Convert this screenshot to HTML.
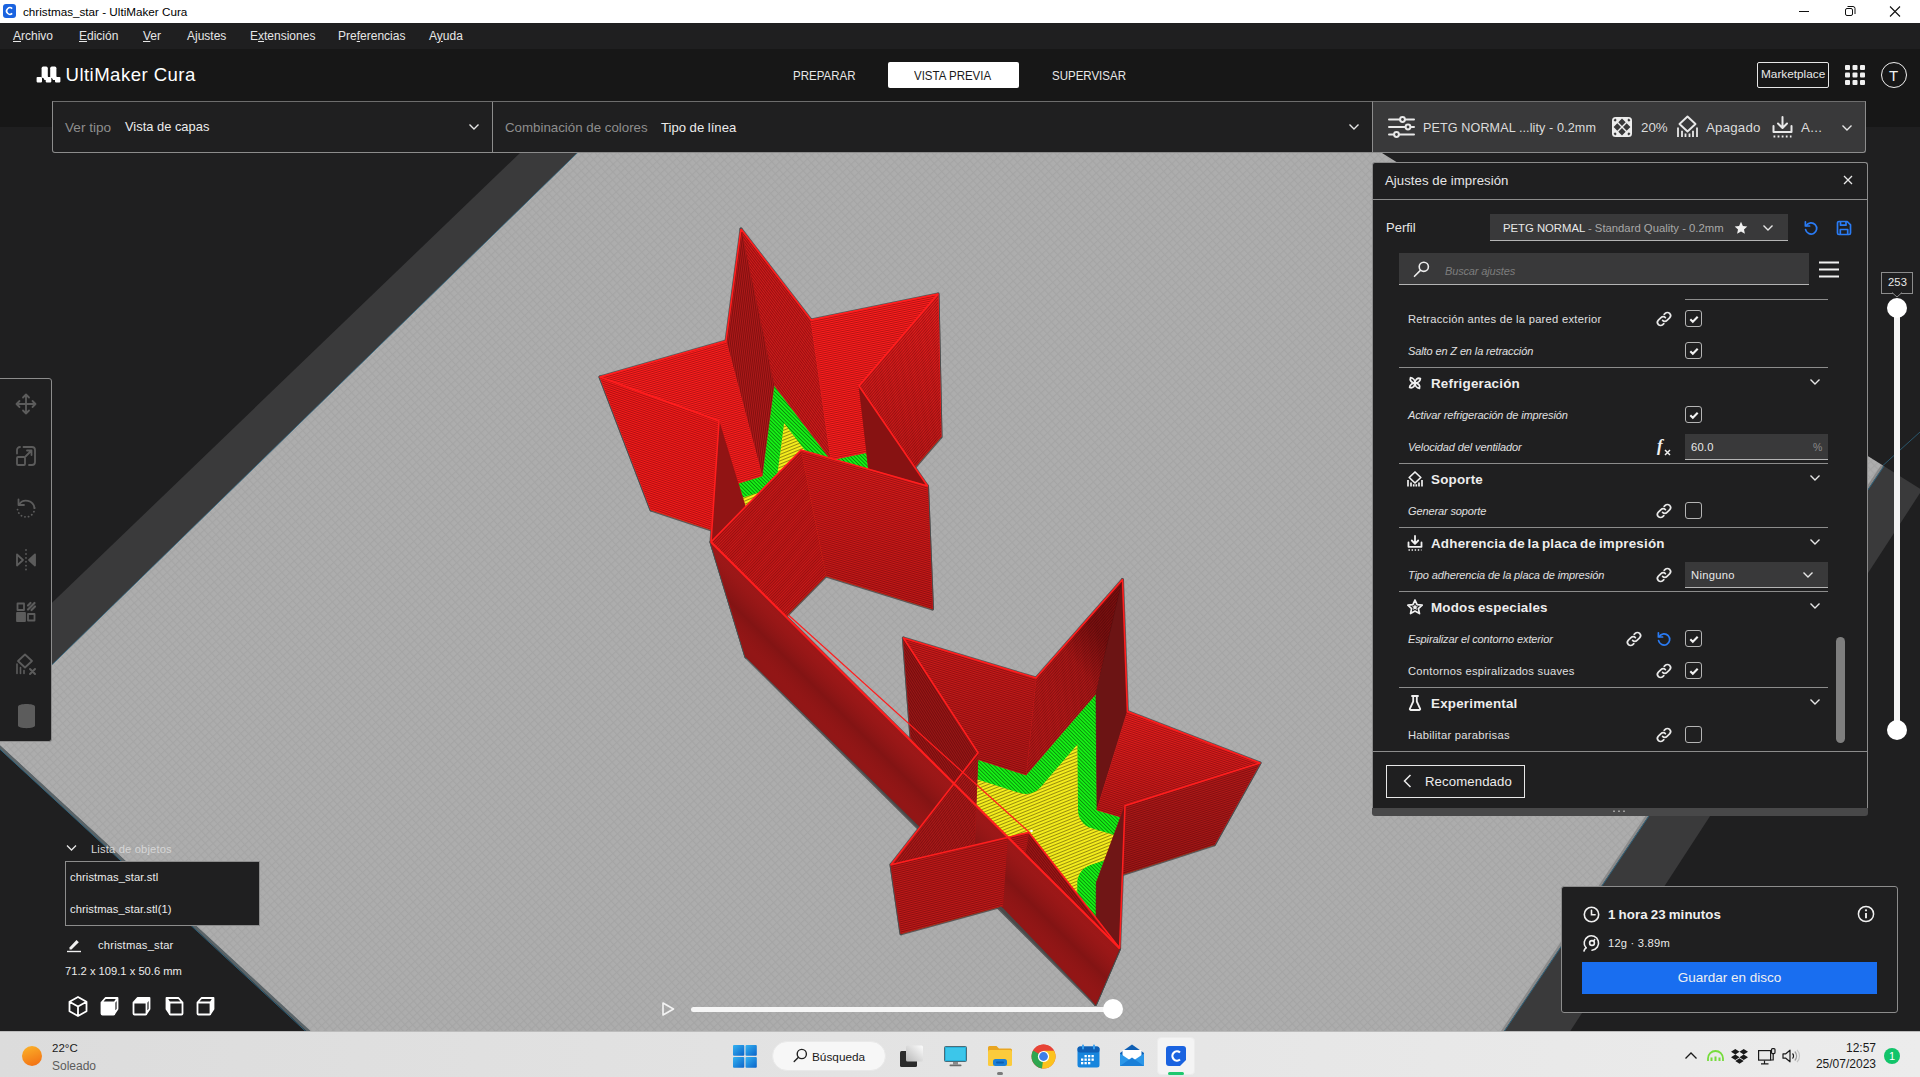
<!DOCTYPE html>
<html lang="es">
<head>
<meta charset="utf-8">
<title>christmas_star - UltiMaker Cura</title>
<style>
*{box-sizing:border-box;margin:0;padding:0}
html,body{width:1920px;height:1077px;overflow:hidden;background:#1f1f20}
body{font-family:"Liberation Sans","DejaVu Sans",sans-serif;color:#d9d9d9;font-size:12px;position:relative}
.abs{position:absolute}
.t{position:absolute;white-space:nowrap;line-height:1}
#scene{position:absolute;left:0;top:0;width:1920px;height:1077px}
/* title bar */
#titlebar{left:0;top:0;width:1920px;height:23px;background:#fff}
#titlebar .t{color:#000;font-size:11.700px}
/* menu */
#menubar{left:0;top:23px;width:1920px;height:26px;background:#1f1f20}
#menubar .t{color:#e6e6e6;font-size:12px;top:7px}
#menubar u{text-decoration-thickness:1px;text-underline-offset:1px}
/* header */
#header{left:0;top:49px;width:1920px;height:78px;background:#171717}
.stage{font-size:13px;color:#e8e8e8;top:20px;transform:scaleX(.885);transform-origin:0 50%}
/* view toolbar */
#viewbar{left:52px;top:101px;width:1321px;height:52px;background:#1f1f20;border:1px solid #8c8c8c;border-top-color:#6d6d6d;border-radius:0 0 0 3px}
#setup{left:1372px;top:101px;width:494px;height:52px;background:#39393a;border:1px solid #8c8c8c;border-top-color:#6d6d6d;border-radius:0 0 3px 0}
#setup .t{color:#dcdcdc;font-size:13.5px;top:18px}
/* settings panel */
#panel{left:1372px;top:162px;width:496px;height:646px;background:#1f1f20;border:1px solid #8c8c8c;border-bottom:none;border-radius:3px 3px 0 0}
#panelgrip{left:1372px;top:808px;width:496px;height:8px;background:#484849;border-radius:0 0 3px 3px}
.sep{position:absolute;height:1px;background:#8c8c8c}
.lbl{position:absolute;white-space:nowrap;line-height:1;font-size:11.5px;color:#dedede}
.lbl.i{font-style:italic}
.cat{position:absolute;white-space:nowrap;line-height:1;font-size:13.5px;font-weight:bold;color:#e6e6e6}
.cb{position:absolute;width:17px;height:17px;border:1px solid #b4b4b4;border-radius:3px;background:#1f1f20}
.ic{position:absolute;overflow:visible}
/* left toolbar */
#lefttools{left:-1px;top:378px;width:53px;height:364px;background:#1f1f20;border:1px solid #8c8c8c;border-radius:0 3px 3px 0}
/* object list */
#objlist{left:65px;top:861px;width:195px;height:65px;background:#1f1f20;border:1px solid #8c8c8c}
/* action panel */
#action{left:1561px;top:886px;width:337px;height:127px;background:#1f1f20;border:1px solid #8c8c8c;border-radius:3px}
#savebtn{left:1582px;top:962px;width:295px;height:32px;background:#196ef0;color:#f0f0f0;font-size:13.5px;text-align:center;line-height:32px}
/* taskbar */
#taskbar{left:0;top:1031px;width:1920px;height:46px;background:linear-gradient(90deg,#dcdcdc 0%,#e4e4e4 50%,#ececec 100%)}
#taskbar .t{color:#1a1a1a;font-size:12px}
</style>
</head>
<body>
<!--SCENE-->
<svg id="scene" viewBox="0 0 1920 1077">
<defs><linearGradient id="gU2" gradientUnits="userSpaceOnUse" x1="0" y1="300" x2="0" y2="500"><stop offset="0" stop-color="#1a0000" stop-opacity="0"/><stop offset="1" stop-color="#1a0000" stop-opacity="0.22"/></linearGradient>
<linearGradient id="gU4" gradientUnits="userSpaceOnUse" x1="0" y1="470" x2="0" y2="600"><stop offset="0" stop-color="#1a0000" stop-opacity="0"/><stop offset="1" stop-color="#1a0000" stop-opacity="0.12"/></linearGradient>
<linearGradient id="gL1" gradientUnits="userSpaceOnUse" x1="0" y1="720" x2="0" y2="840"><stop offset="0" stop-color="#1a0000" stop-opacity="0"/><stop offset="1" stop-color="#1a0000" stop-opacity="0.25"/></linearGradient>
<linearGradient id="gL2" gradientUnits="userSpaceOnUse" x1="0" y1="780" x2="0" y2="870"><stop offset="0" stop-color="#1a0000" stop-opacity="0"/><stop offset="1" stop-color="#1a0000" stop-opacity="0.12"/></linearGradient>
<linearGradient id="gL8" gradientUnits="userSpaceOnUse" x1="0" y1="650" x2="0" y2="770"><stop offset="0" stop-color="#1a0000" stop-opacity="0"/><stop offset="1" stop-color="#1a0000" stop-opacity="0.14"/></linearGradient>
<pattern id="grid" width="5.6" height="5.6" patternUnits="userSpaceOnUse" patternTransform="rotate(-43)"><rect width="5.6" height="5.6" fill="#adadad"/><path d="M0 0.5H5.6M0.5 0V5.6" stroke="#a5a5a5" stroke-width="1.3"/></pattern>
<pattern id="sta" width="2" height="2" patternUnits="userSpaceOnUse" patternTransform="rotate(0)"><rect y="1" width="2" height="1" fill="#3a0000" fill-opacity=".26"/></pattern>
<pattern id="stb" width="2" height="2" patternUnits="userSpaceOnUse" patternTransform="rotate(20)"><rect y="1" width="2" height="1" fill="#3a0000" fill-opacity=".26"/></pattern>
<pattern id="stc" width="2" height="2" patternUnits="userSpaceOnUse" patternTransform="rotate(-18)"><rect y="1" width="2" height="1" fill="#3a0000" fill-opacity=".26"/></pattern>
<pattern id="std" width="2" height="2" patternUnits="userSpaceOnUse" patternTransform="rotate(45)"><rect y="1" width="2" height="1" fill="#3a0000" fill-opacity=".26"/></pattern>
<pattern id="ste" width="2" height="2" patternUnits="userSpaceOnUse" patternTransform="rotate(-45)"><rect y="1" width="2" height="1" fill="#3a0000" fill-opacity=".26"/></pattern>
<pattern id="stf" width="2" height="2" patternUnits="userSpaceOnUse" patternTransform="rotate(70)"><rect y="1" width="2" height="1" fill="#3a0000" fill-opacity=".26"/></pattern>
<pattern id="hy" width="3" height="3" patternUnits="userSpaceOnUse" patternTransform="rotate(-22)"><rect width="3" height="3" fill="#f4ec1c"/><rect y="2" width="3" height="1" fill="#4a4000" fill-opacity=".55"/></pattern>
<pattern id="hg" width="2.6" height="2.6" patternUnits="userSpaceOnUse" patternTransform="rotate(45)"><rect width="2.6" height="2.6" fill="#16f016"/><rect y="1.8" width="2.6" height=".8" fill="#003a00" fill-opacity=".6"/></pattern>
<pattern id="w2109_0" width="2" height="2" patternUnits="userSpaceOnUse" patternTransform="rotate(52.6)"><rect y="1" width="2" height="1" fill="#3a0000" fill-opacity="0.38"/></pattern>
<pattern id="w2109_9" width="2" height="2" patternUnits="userSpaceOnUse" patternTransform="rotate(-82.4)"><rect y="1" width="2" height="1" fill="#3a0000" fill-opacity="0.38"/></pattern>
<pattern id="w2109_1" width="2" height="2" patternUnits="userSpaceOnUse" patternTransform="rotate(-11.7)"><rect y="1" width="2" height="1" fill="#3a0000" fill-opacity="0.38"/></pattern>
<pattern id="w2109_2" width="2" height="2" patternUnits="userSpaceOnUse" patternTransform="rotate(130.7)"><rect y="1" width="2" height="1" fill="#3a0000" fill-opacity="0.38"/></pattern>
<pattern id="w2109_8" width="2" height="2" patternUnits="userSpaceOnUse" patternTransform="rotate(-16.5)"><rect y="1" width="2" height="1" fill="#3a0000" fill-opacity="0.38"/></pattern>
<pattern id="w2109_7" width="2" height="2" patternUnits="userSpaceOnUse" patternTransform="rotate(-160.7)"><rect y="1" width="2" height="1" fill="#3a0000" fill-opacity="0.38"/></pattern>
<pattern id="w2109_4" width="2" height="2" patternUnits="userSpaceOnUse" patternTransform="rotate(-163.5)"><rect y="1" width="2" height="1" fill="#3a0000" fill-opacity="0.38"/></pattern>
<pattern id="w2109_5" width="2" height="2" patternUnits="userSpaceOnUse" patternTransform="rotate(134.5)"><rect y="1" width="2" height="1" fill="#3a0000" fill-opacity="0.38"/></pattern>
<pattern id="w7497_9" width="2" height="2" patternUnits="userSpaceOnUse" patternTransform="rotate(-48.9)"><rect y="1" width="2" height="1" fill="#3a0000" fill-opacity="0.38"/></pattern>
<pattern id="w7497_8" width="2" height="2" patternUnits="userSpaceOnUse" patternTransform="rotate(17.3)"><rect y="1" width="2" height="1" fill="#3a0000" fill-opacity="0.38"/></pattern>
<pattern id="w7497_7" width="2" height="2" patternUnits="userSpaceOnUse" patternTransform="rotate(-122.2)"><rect y="1" width="2" height="1" fill="#3a0000" fill-opacity="0.38"/></pattern>
<pattern id="w7497_1" width="2" height="2" patternUnits="userSpaceOnUse" patternTransform="rotate(19.0)"><rect y="1" width="2" height="1" fill="#3a0000" fill-opacity="0.38"/></pattern>
<pattern id="w7497_2" width="2" height="2" patternUnits="userSpaceOnUse" patternTransform="rotate(162.2)"><rect y="1" width="2" height="1" fill="#3a0000" fill-opacity="0.38"/></pattern>
<linearGradient id="gL9" gradientUnits="userSpaceOnUse" x1="1040" y1="690" x2="1105" y2="640"><stop offset="0" stop-color="#000" stop-opacity="0"/><stop offset=".55" stop-color="#000" stop-opacity=".06"/><stop offset="1" stop-color="#1a0000" stop-opacity=".38"/></linearGradient>
<pattern id="w7497_6" width="2" height="2" patternUnits="userSpaceOnUse" patternTransform="rotate(-51.6)"><rect y="1" width="2" height="1" fill="#3a0000" fill-opacity="0.38"/></pattern>
<pattern id="w7497_5" width="2" height="2" patternUnits="userSpaceOnUse" patternTransform="rotate(165.8)"><rect y="1" width="2" height="1" fill="#3a0000" fill-opacity="0.38"/></pattern>
<pattern id="w7497_4" width="2" height="2" patternUnits="userSpaceOnUse" patternTransform="rotate(-127.7)"><rect y="1" width="2" height="1" fill="#3a0000" fill-opacity="0.38"/></pattern>
<linearGradient id="gA" gradientUnits="userSpaceOnUse" x1="900" y1="740" x2="860" y2="780"><stop offset="0" stop-color="#b01a1a" stop-opacity=".4"/><stop offset=".4" stop-color="#7a1212" stop-opacity=".55"/><stop offset=".75" stop-color="#a01616" stop-opacity=".25"/><stop offset="1" stop-color="#a01616" stop-opacity="0"/></linearGradient></defs>
<rect width="1920" height="1077" fill="#1f1f20"/>
<polygon points="631.6,100.0 575.0,100.0 0.0,652.8 -130.0,778.0 -16.0,731.0" fill="#3a3a3b" />
<polygon points="1883.0,465.4 1922.0,490.0 1540.4,1077.0 1472.6,1077.0" fill="#3a3a3b" />
<polygon points="-16.0,731.0 631.6,100.0 1297.0,100.0 1883.0,465.4 1472.6,1077.0 359.6,1077.0" fill="url(#grid)" />
<polyline points="-16.0,732.5 360.0,1078.5" fill="none" stroke="#5b6468" stroke-width="3"/>
<polyline points="-16.0,734.5 359.0,1080.5" fill="none" stroke="#2f6f8f" stroke-width="1" stroke-opacity=".8"/>
<polyline points="631.6,100.0 -16.0,731.0" fill="none" stroke="#2f6f8f" stroke-width="1" stroke-opacity=".7"/>
<polyline points="1882.0,466.0 1471.6,1077.0" fill="none" stroke="#8a8a8a" stroke-width="2.4"/>
<polyline points="1884.0,466.0 1473.6,1077.0" fill="none" stroke="#2f6f8f" stroke-width="1" stroke-opacity=".8"/>
<polyline points="1883.0,465.4 1920.0,432.0" fill="none" stroke="#2f6f8f" stroke-width="1" stroke-opacity=".7"/>
<!--WATERMARK-->
<g fill="#4a4a4a" stroke="#4a4a4a" stroke-opacity=".85" stroke-width="3" stroke-linejoin="round"><polygon points="741.0,229.0 811.0,320.0 831.0,460.0 774.0,385.0"/><polygon points="1122.5,579.6 1127.4,711.5 1097.0,810.0 1096.0,693.7"/><polygon points="811.0,320.0 938.0,294.0 941.0,437.0 831.0,460.0"/><polygon points="1127.4,711.5 1260.0,763.0 1214.3,844.7 1097.0,810.0"/><polygon points="938.0,294.0 859.0,386.0 874.0,515.0 941.0,437.0"/><polygon points="1260.0,763.0 1125.0,805.7 1096.3,883.0 1214.3,844.7"/><polygon points="859.0,386.0 927.5,486.0 932.5,609.0 874.0,515.0"/><polygon points="1125.0,805.7 1119.6,948.3 1095.5,1004.5 1096.3,883.0"/><polygon points="927.5,486.0 801.0,450.0 826.0,576.0 932.5,609.0"/><polygon points="1119.6,948.3 1029.0,832.4 1017.0,902.0 1095.5,1004.5"/><polygon points="801.0,450.0 711.0,542.0 746.0,657.0 826.0,576.0"/><polygon points="1029.0,832.4 891.0,864.7 901.0,933.8 1017.0,902.0"/><polygon points="711.0,542.0 719.0,421.0 757.0,545.0 746.0,657.0"/><polygon points="891.0,864.7 978.0,752.7 974.5,843.0 901.0,933.8"/><polygon points="719.0,421.0 600.0,377.0 651.0,510.0 757.0,545.0"/><polygon points="978.0,752.7 903.4,638.0 911.0,738.0 974.5,843.0"/><polygon points="600.0,377.0 726.0,341.0 762.0,476.0 651.0,510.0"/><polygon points="903.4,638.0 1036.0,678.0 1026.0,775.0 911.0,738.0"/><polygon points="726.0,341.0 741.0,229.0 774.0,385.0 762.0,476.0"/><polygon points="1036.0,678.0 1122.5,579.6 1096.0,693.7 1026.0,775.0"/><polygon points="711.0,542.0 1119.6,948.3 1095.5,1004.5 746.0,657.0"/></g>
<clipPath id="cfu"><polygon points="774.0,385.0 831.0,460.0 941.0,437.0 874.0,515.0 932.5,609.0 826.0,576.0 746.0,657.0 757.0,545.0 651.0,510.0 762.0,476.0"/></clipPath>
<g clip-path="url(#cfu)"><polygon points="774.0,385.0 831.0,460.0 941.0,437.0 874.0,515.0 932.5,609.0 826.0,576.0 746.0,657.0 757.0,545.0 651.0,510.0 762.0,476.0" fill="url(#hy)" stroke="url(#hg)" stroke-width="30" stroke-linejoin="round"/></g>
<polygon points="741.0,229.0 811.0,320.0 831.0,460.0 774.0,385.0" fill="#d11b1b" stroke="#d11b1b" stroke-width=".7" stroke-linejoin="round"/>
<polygon points="741.0,229.0 811.0,320.0 831.0,460.0 774.0,385.0" fill="url(#w2109_0)"/>
<polygon points="726.0,341.0 741.0,229.0 774.0,385.0 762.0,476.0" fill="#ae1919" stroke="#ae1919" stroke-width=".7" stroke-linejoin="round"/>
<polygon points="726.0,341.0 741.0,229.0 774.0,385.0 762.0,476.0" fill="url(#w2109_9)"/>
<polygon points="811.0,320.0 938.0,294.0 941.0,437.0 831.0,460.0" fill="#ff1e1e" stroke="#ff1e1e" stroke-width=".7" stroke-linejoin="round"/>
<polygon points="811.0,320.0 938.0,294.0 941.0,437.0 831.0,460.0" fill="url(#w2109_1)"/>
<polygon points="938.0,294.0 859.0,386.0 874.0,515.0 941.0,437.0" fill="#e91e1e" stroke="#e91e1e" stroke-width=".7" stroke-linejoin="round"/>
<polygon points="938.0,294.0 859.0,386.0 874.0,515.0 941.0,437.0" fill="url(#gU2)"/>
<polygon points="938.0,294.0 859.0,386.0 874.0,515.0 941.0,437.0" fill="url(#w2109_2)"/>
<polygon points="600.0,377.0 726.0,341.0 762.0,476.0 651.0,510.0" fill="#ff1e1e" stroke="#ff1e1e" stroke-width=".7" stroke-linejoin="round"/>
<polygon points="600.0,377.0 726.0,341.0 762.0,476.0 651.0,510.0" fill="url(#w2109_8)"/>
<polygon points="719.0,421.0 600.0,377.0 651.0,510.0 757.0,545.0" fill="#f81b1b" stroke="#f81b1b" stroke-width=".7" stroke-linejoin="round"/>
<polygon points="719.0,421.0 600.0,377.0 651.0,510.0 757.0,545.0" fill="url(#w2109_7)"/>
<polygon points="859.0,386.0 927.5,486.0 932.5,609.0 874.0,515.0" fill="#871212" stroke="#871212" stroke-width=".7" stroke-linejoin="round"/>
<polygon points="927.5,486.0 801.0,450.0 826.0,576.0 932.5,609.0" fill="#da1b1b" stroke="#da1b1b" stroke-width=".7" stroke-linejoin="round"/>
<polygon points="927.5,486.0 801.0,450.0 826.0,576.0 932.5,609.0" fill="url(#gU4)"/>
<polygon points="927.5,486.0 801.0,450.0 826.0,576.0 932.5,609.0" fill="url(#w2109_4)"/>
<polygon points="711.0,542.0 719.0,421.0 757.0,545.0 746.0,657.0" fill="#911414" stroke="#911414" stroke-width=".7" stroke-linejoin="round"/>
<polygon points="801.0,450.0 711.0,542.0 746.0,657.0 826.0,576.0" fill="#cc1919" stroke="#cc1919" stroke-width=".7" stroke-linejoin="round"/>
<polygon points="801.0,450.0 711.0,542.0 746.0,657.0 826.0,576.0" fill="url(#w2109_5)"/>
<clipPath id="cfl"><polygon points="1096.0,693.7 1097.0,810.0 1214.3,844.7 1096.3,883.0 1095.5,1004.5 1017.0,902.0 901.0,933.8 974.5,843.0 911.0,738.0 1026.0,775.0"/></clipPath>
<g clip-path="url(#cfl)"><polygon points="1096.0,693.7 1097.0,810.0 1214.3,844.7 1096.3,883.0 1095.5,1004.5 1017.0,902.0 901.0,933.8 974.5,843.0 911.0,738.0 1026.0,775.0" fill="url(#hy)" stroke="url(#hg)" stroke-width="38" stroke-linejoin="round"/></g>
<polygon points="1036.0,678.0 1122.5,579.6 1096.0,693.7 1026.0,775.0" fill="#b81919" stroke="#b81919" stroke-width=".7" stroke-linejoin="round"/>
<polygon points="1036.0,678.0 1122.5,579.6 1096.0,693.7 1026.0,775.0" fill="url(#w7497_9)"/>
<polygon points="1122.5,579.6 1127.4,711.5 1097.0,810.0 1096.0,693.7" fill="#6c1414" stroke="#6c1414" stroke-width=".7" stroke-linejoin="round"/>
<polygon points="903.4,638.0 1036.0,678.0 1026.0,775.0 911.0,738.0" fill="#ce1b1b" stroke="#ce1b1b" stroke-width=".7" stroke-linejoin="round"/>
<polygon points="903.4,638.0 1036.0,678.0 1026.0,775.0 911.0,738.0" fill="url(#gL8)"/>
<polygon points="903.4,638.0 1036.0,678.0 1026.0,775.0 911.0,738.0" fill="url(#w7497_8)"/>
<polygon points="978.0,752.7 903.4,638.0 911.0,738.0 974.5,843.0" fill="#9a1616" stroke="#9a1616" stroke-width=".7" stroke-linejoin="round"/>
<polygon points="978.0,752.7 903.4,638.0 911.0,738.0 974.5,843.0" fill="url(#w7497_7)"/>
<polygon points="1127.4,711.5 1260.0,763.0 1214.3,844.7 1097.0,810.0" fill="#e91e1e" stroke="#e91e1e" stroke-width=".7" stroke-linejoin="round"/>
<polygon points="1127.4,711.5 1260.0,763.0 1214.3,844.7 1097.0,810.0" fill="url(#gL1)"/>
<polygon points="1127.4,711.5 1260.0,763.0 1214.3,844.7 1097.0,810.0" fill="url(#w7497_1)"/>
<polygon points="1260.0,763.0 1125.0,805.7 1096.3,883.0 1214.3,844.7" fill="#b31919" stroke="#b31919" stroke-width=".7" stroke-linejoin="round"/>
<polygon points="1260.0,763.0 1125.0,805.7 1096.3,883.0 1214.3,844.7" fill="url(#gL2)"/>
<polygon points="1260.0,763.0 1125.0,805.7 1096.3,883.0 1214.3,844.7" fill="url(#w7497_2)"/>
<polygon points="1036.0,678.0 1122.5,579.6 1096.0,693.7 1026.0,775.0" fill="url(#gL9)"/>
<polygon points="711.0,542.0 1008.0,837.5 1003.0,908.0 746.0,657.0" fill="#8e1616" stroke="#8e1616" stroke-width=".7"/>
<polygon points="711.0,542.0 1008.0,837.5 1003.0,908.0 746.0,657.0" fill="url(#gA)"/>
<polygon points="891.0,864.7 978.0,752.7 974.5,843.0 901.0,933.8" fill="#ac1919" stroke="#ac1919" stroke-width=".7" stroke-linejoin="round"/>
<polygon points="891.0,864.7 978.0,752.7 974.5,843.0 901.0,933.8" fill="url(#w7497_6)"/>
<polygon points="1029.0,832.4 891.0,864.7 901.0,933.8 1017.0,902.0" fill="#bf1919" stroke="#bf1919" stroke-width=".7" stroke-linejoin="round"/>
<polygon points="1029.0,832.4 891.0,864.7 901.0,933.8 1017.0,902.0" fill="url(#w7497_5)"/>
<polygon points="1125.0,805.7 1119.6,948.3 1095.5,1004.5 1096.3,883.0" fill="#701616" stroke="#701616" stroke-width=".7" stroke-linejoin="round"/>
<polygon points="1119.6,948.3 1029.0,832.4 1017.0,902.0 1095.5,1004.5" fill="#9f1616" stroke="#9f1616" stroke-width=".7" stroke-linejoin="round"/>
<polygon points="1119.6,948.3 1029.0,832.4 1017.0,902.0 1095.5,1004.5" fill="url(#w7497_4)"/>
<polygon points="1008.0,837.5 1119.6,948.3 1095.5,1004.5 1003.0,908.0" fill="#8e1616" />
<polygon points="1008.0,837.5 1119.6,948.3 1095.5,1004.5 1003.0,908.0" fill="url(#gA)"/>
<polyline points="741.0,229.0 811.0,320.0 938.0,294.0 859.0,386.0 927.5,486.0 801.0,450.0 711.0,542.0 719.0,421.0 600.0,377.0 726.0,341.0 741.0,229.0" fill="none" stroke="#ff1e1e" stroke-width="1.6" stroke-linejoin="round"/>
<polyline points="1029.0,832.4 891.0,864.7 978.0,752.7 903.4,638.0 1036.0,678.0 1122.5,579.6 1127.4,711.5 1260.0,763.0 1125.0,805.7 1119.6,948.3 1029.0,832.4" fill="none" stroke="#ff1e1e" stroke-width="1.6" stroke-linejoin="round"/>
<polyline points="711.0,542.0 1119.6,948.3" fill="none" stroke="#ff1e1e" stroke-width="2.2"/>
<polyline points="788.4,615.0 1029.0,832.0" fill="none" stroke="#ff1e1e" stroke-width="1.2"/>
<circle cx="1031.5" cy="831" r="1.3" fill="#fff"/>
</svg>
<!--/SCENE-->

<!-- title bar -->
<div id="titlebar" class="abs">
  <svg class="ic" style="left:3px;top:4px" width="13" height="14" viewBox="0 0 13 14"><rect x="0" y="0" width="13" height="14" rx="3" fill="#1a63e0"/><path d="M9.2 4.6A3.3 3.3 0 1 0 9.2 9.4" fill="none" stroke="#fff" stroke-width="1.6"/></svg>
  <span class="t" style="left:23px;top:5.600px">christmas_star - UltiMaker Cura</span>
  <svg class="ic" style="left:1798px;top:5px" width="110" height="14" viewBox="0 0 110 14"><path d="M1 6.5h10" stroke="#111" stroke-width="1"/><rect x="47.500" y="3.500" width="7" height="7" rx="1.500" fill="none" stroke="#111"/><path d="M49.500 1.500h5.500a2 2 0 0 1 2 2v5.500" fill="none" stroke="#111"/><path d="M92 1.500l10 10M102 1.500l-10 10" stroke="#111" stroke-width="1.100"/></svg>
</div>

<!-- menu bar -->
<div id="menubar" class="abs">
  <span class="t" style="left:13px"><u>A</u>rchivo</span>
  <span class="t" style="left:79px"><u>E</u>dición</span>
  <span class="t" style="left:143px"><u>V</u>er</span>
  <span class="t" style="left:187px">A<u>j</u>ustes</span>
  <span class="t" style="left:250px">E<u>x</u>tensiones</span>
  <span class="t" style="left:338px">Pre<u>f</u>erencias</span>
  <span class="t" style="left:429px">A<u>y</u>uda</span>
</div>

<!-- header -->
<div id="header" class="abs">
  <svg class="ic" style="left:36px;top:17px" width="25" height="17" viewBox="0 0 25 17" fill="#fff"><rect x="0.600" y="11" width="5.400" height="5.400" rx=".8"/><rect x="5.600" y="0.600" width="6.200" height="11.500" rx="1.600"/><path d="M6.500 10.500h5.300l2 3.500h-5.300z"/><rect x="9.700" y="11" width="5.600" height="5.400" rx=".8"/><rect x="14.200" y="0.600" width="6.200" height="11.500" rx="1.600"/><path d="M15.100 10.500h5.300l2 3.500h-5.300z"/><rect x="19" y="11" width="5.400" height="5.400" rx=".8"/></svg>
  <span class="t" style="left:65.500px;top:17.300px;font-size:18.600px;color:#fff;letter-spacing:.45px">UltiMaker Cura</span>
  <span class="t stage" style="left:793px">PREPARAR</span>
  <div class="abs" style="left:888px;top:13px;width:131px;height:26px;background:#fff;border-radius:2px"></div>
  <span class="t stage" style="left:914px;color:#1a1a1a">VISTA PREVIA</span>
  <span class="t stage" style="left:1052px">SUPERVISAR</span>
  <div class="abs" style="left:1757px;top:13px;width:72px;height:26px;border:1px solid #e6e6e6;border-radius:2px"></div>
  <span class="t" style="left:1761px;top:20px;font-size:11.800px;color:#e8e8e8">Marketplace</span>
  <svg class="ic" style="left:1845px;top:16px" width="20" height="20" viewBox="0 0 20 20" fill="#f0f0f0"><rect x="0" y="0" width="5" height="5" rx="1"/><rect x="7.500" y="0" width="5" height="5" rx="1"/><rect x="15" y="0" width="5" height="5" rx="1"/><rect x="0" y="7.500" width="5" height="5" rx="1"/><rect x="7.500" y="7.500" width="5" height="5" rx="1"/><rect x="15" y="7.500" width="5" height="5" rx="1"/><rect x="0" y="15" width="5" height="5" rx="1"/><rect x="7.500" y="15" width="5" height="5" rx="1"/><rect x="15" y="15" width="5" height="5" rx="1"/></svg>
  <div class="abs" style="left:1881px;top:13px;width:26px;height:26px;border:1px solid #f0f0f0;border-radius:50%"></div>
  <span class="t" style="left:1889px;top:18.500px;font-size:15px;color:#f0f0f0">T</span>
</div>

<!-- view toolbar -->
<div id="viewbar" class="abs">
  <span class="t" style="left:12px;top:19px;font-size:13.600px;color:#8e8e8e">Ver tipo</span>
  <span class="t" style="left:72px;top:19px;font-size:12.900px;color:#ececec">Vista de capas</span>
  <svg class="ic" style="left:415px;top:21px" width="12" height="8" viewBox="0 0 12 8"><path d="M1.500 1.500l4.500 4.500 4.500-4.500" fill="none" stroke="#e6e6e6" stroke-width="1.400"/></svg>
  <div class="abs" style="left:439px;top:0;width:1px;height:50px;background:#8c8c8c"></div>
  <span class="t" style="left:452px;top:19px;font-size:13.300px;color:#8e8e8e">Combinación de colores</span>
  <span class="t" style="left:608px;top:19px;font-size:13.100px;color:#ececec">Tipo de línea</span>
  <svg class="ic" style="left:1295px;top:21px" width="12" height="8" viewBox="0 0 12 8"><path d="M1.500 1.500l4.500 4.500 4.500-4.500" fill="none" stroke="#e6e6e6" stroke-width="1.400"/></svg>
</div>

<!--SETUP-->
<!--/SETUP-->

<!--PANEL-->
<div id="setup" class="abs"></div>
<svg class="ic" style="left:1388px;top:115px" width="27" height="24" viewBox="0 0 27 24" fill="none" stroke="#e8e8e8" stroke-width="2" stroke-linecap="round"><path d="M1 4.500h10.500M17.500 4.500H26M1 12h15.500M23.500 12H26M1 19.500h4.500M11.500 19.500H26"/><circle cx="14.500" cy="4.500" r="2.400"/><circle cx="20" cy="12" r="2.400"/><circle cx="8.500" cy="19.500" r="2.400"/></svg>
<span class="t" style="left:1423px;top:121.7px;font-size:12.6px;color:#dcdcdc;letter-spacing:.1px">PETG NORMAL ...lity - 0.2mm</span>
<svg class="ic" style="left:1612px;top:117px" width="20" height="20" viewBox="0 0 20 20"><rect x="0" y="0" width="20" height="20" rx="3.500" fill="#ededed"/><g fill="#39393a"><path d="M10 1.600l3.700 3.700-3.700 3.700-3.700-3.700zM10 11l3.700 3.700-3.700 3.700-3.700-3.700zM5.300 6.300l3.700 3.700-3.700 3.700-3.700-3.700zM14.700 6.300l3.700 3.700-3.700 3.700-3.700-3.700z"/><path d="M1.600 3.200l1.600-1.600 1.500 1.500-1.600 1.600zM16.800 1.600l1.600 1.600-1.500 1.500-1.600-1.600zM1.600 16.800l1.500-1.500 1.600 1.600-1.500 1.500zM18.400 16.800l-1.500-1.500-1.600 1.600 1.500 1.500z"/></g></svg>
<span class="t" style="left:1641px;top:120.8px;font-size:13.3px;color:#dcdcdc;">20%</span>
<svg class="ic" style="left:1677px;top:115px" width="21" height="23" viewBox="0 0 21 23" fill="none" stroke="#e8e8e8" stroke-width="1.900" stroke-linejoin="round"><path d="M10.500 1.500l8 7.500-8 7.500-8-7.500z"/><path d="M1 12.500v9.500M5 15.800v6.200M8.500 18.500v3.500M12.500 18.500v3.500M16 15.800v6.200M20 12.500v9.500" stroke-width="1.800"/></svg>
<span class="t" style="left:1706px;top:120.8px;font-size:13.3px;color:#dcdcdc;letter-spacing:.2px">Apagado</span>
<svg class="ic" style="left:1772px;top:116px" width="21" height="22" viewBox="0 0 21 22" fill="none" stroke="#e8e8e8" stroke-width="2" stroke-linecap="round" stroke-linejoin="round"><path d="M10.500 1v10.500M6 7.500l4.500 4.500 4.500-4.500"/><path d="M1.500 10v6h18v-6"/><path d="M1.500 20.500h18" stroke-dasharray="1.800 2.300" stroke-linecap="butt" stroke-width="2"/></svg>
<span class="t" style="left:1801px;top:120.8px;font-size:13.3px;color:#dcdcdc;letter-spacing:.3px">A...</span>
<svg class="ic" style="left:1840.5px;top:123.5px" width="12" height="8" viewBox="0 0 12 8"><path d="M1.500 1.500l4.500 4.500 4.500-4.500" fill="none" stroke="#e6e6e6" stroke-width="1.4"/></svg>
<div id="panel" class="abs"></div><div id="panelgrip" class="abs"></div>
<svg class="ic" style="left:1613px;top:810px" width="12" height="3" viewBox="0 0 12 3" fill="#9a9a9a"><rect x="0" y="0.500" width="2" height="1.500"/><rect x="5" y="0.500" width="2" height="1.500"/><rect x="10" y="0.500" width="2" height="1.500"/></svg>
<span class="t" style="left:1385px;top:173.9px;font-size:13.2px;color:#e6e6e6;letter-spacing:.05px">Ajustes de impresión</span>
<svg class="ic" style="left:1843px;top:175px" width="10" height="10" viewBox="0 0 10 10"><path d="M1 1l8 8M9 1l-8 8" stroke="#e8e8e8" stroke-width="1.300"/></svg>
<div class="sep" style="left:1373px;top:199px;width:494px"></div>
<span class="t" style="left:1386px;top:221.0px;font-size:13px;color:#e6e6e6;">Perfil</span>
<div class="abs" style="left:1490px;top:214px;width:298px;height:27px;background:#39393a;border-bottom:1px solid #b4b4b4"></div>
<span class="t" style="left:1503px;top:222.8px;font-size:11.300px;color:#e8e8e8">PETG NORMAL<span style="color:#a8a8a8"> - Standard Quality - 0.2mm</span></span>
<svg class="ic" style="left:1734px;top:221px" width="14" height="14" viewBox="0 0 14 14"><path d="M7 .8l1.900 4.100 4.400.5-3.300 3 .9 4.400L7 10.600 3.100 12.800l.9-4.400-3.300-3 4.400-.5z" fill="#f0f0f0"/></svg>
<svg class="ic" style="left:1762.0px;top:223.5px" width="12" height="8" viewBox="0 0 12 8"><path d="M1.500 1.500l4.500 4.500 4.500-4.500" fill="none" stroke="#e6e6e6" stroke-width="1.4"/></svg>
<svg class="ic" style="left:1803px;top:220px" width="16" height="16" viewBox="0 0 16 16" fill="none" stroke="#2a7bf4" stroke-width="1.700"><path d="M3.300 5.500A5.600 5.600 0 1 1 2.600 9.600" stroke-linecap="round"/><path d="M2.400 1.800v4.200h4.200" stroke-linecap="round" stroke-linejoin="round"/></svg>
<svg class="ic" style="left:1836px;top:220px" width="16" height="16" viewBox="0 0 16 16" fill="none" stroke="#2a7bf4" stroke-width="1.700" stroke-linejoin="round"><path d="M1.500 3a1.500 1.500 0 0 1 1.500-1.500h8.200l3.300 3.300V13a1.500 1.500 0 0 1-1.500 1.500H3A1.500 1.500 0 0 1 1.500 13z"/><path d="M4.500 1.800v3.400h5.500V1.800M4.300 14.200V9.500h7.400v4.700"/></svg>
<div class="abs" style="left:1399px;top:253px;width:410px;height:32px;background:#39393a;border-bottom:1px solid #b4b4b4"></div>
<svg class="ic" style="left:1413px;top:260px" width="18" height="18" viewBox="0 0 18 18" fill="none" stroke="#ececec" stroke-width="1.600" stroke-linecap="round"><circle cx="10.800" cy="6.800" r="4.600"/><path d="M7.400 10.400L1.500 16.300"/></svg>
<span class="t" style="left:1445px;top:265.5px;font-size:11px;color:#7d7d7d;font-style:italic;letter-spacing:-.15px">Buscar ajustes</span>
<svg class="ic" style="left:1819px;top:261px" width="20" height="17" viewBox="0 0 20 17"><path d="M0 1.500h20M0 8.500h20M0 15.500h20" stroke="#f0f0f0" stroke-width="2"/></svg>
<div class="sep" style="left:1685px;top:299px;width:143px"></div>
<span class="t" style="left:1408px;top:313.9px;font-size:11.2px;color:#e0e0e0;letter-spacing:.27px">Retracción antes de la pared exterior</span>
<svg class="ic" style="left:1656px;top:311px" width="16" height="16" viewBox="0 0 16 16" fill="none" stroke="#e8e8e8" stroke-width="1.7" stroke-linecap="round"><path d="M6.600 9.400a3.100 3.100 0 0 0 4.400 0l2.600-2.600a3.100 3.100 0 0 0-4.400-4.400l-1 1"/><path d="M9.400 6.600a3.100 3.100 0 0 0-4.400 0l-2.600 2.600a3.100 3.100 0 0 0 4.400 4.400l1-1"/></svg>
<div class="cb" style="left:1685px;top:310px"><svg width="16" height="16" viewBox="0 0 16 16" style="position:absolute;left:-0.5px;top:-0.5px"><path d="M4.300 8.300l2.500 2.400 4.900-5" fill="none" stroke="#f2f2f2" stroke-width="2.100"/></svg></div>
<span class="t" style="left:1408px;top:346.0px;font-size:11px;color:#e0e0e0;font-style:italic;letter-spacing:-.12px">Salto en Z en la retracción</span>
<div class="cb" style="left:1685px;top:342px"><svg width="16" height="16" viewBox="0 0 16 16" style="position:absolute;left:-0.5px;top:-0.5px"><path d="M4.300 8.300l2.500 2.400 4.900-5" fill="none" stroke="#f2f2f2" stroke-width="2.100"/></svg></div>
<svg class="ic" style="left:1407px;top:375px" width="16" height="16" viewBox="0 0 16 16"><g fill="none" stroke="#f0f0f0" stroke-width="1.800" stroke-linejoin="round" transform="rotate(38 8 8)"><path d="M8 8C6 5.500 6.500 2 9.500 1.200 11 3.500 10 6.500 8 8z"/><path d="M8 8c2.500-2 6-1.500 6.800 1.500C12.500 11 9.500 10 8 8z"/><path d="M8 8c2 2.500 1.500 6-1.500 6.800C5 12.500 6 9.500 8 8z"/><path d="M8 8C5.500 10 2 9.500 1.200 6.500 3.500 5 6.500 6 8 8z"/></g></svg>
<span class="t" style="left:1431px;top:376.8px;font-size:13.4px;color:#ededed;font-weight:bold;letter-spacing:.2px;word-spacing:-1.1px">Refrigeración</span>
<svg class="ic" style="left:1809.0px;top:378.0px" width="12" height="8" viewBox="0 0 12 8"><path d="M1.500 1.500l4.500 4.500 4.500-4.500" fill="none" stroke="#e6e6e6" stroke-width="1.4"/></svg>
<span class="t" style="left:1408px;top:410.0px;font-size:11px;color:#e0e0e0;font-style:italic;letter-spacing:-.12px">Activar refrigeración de impresión</span>
<div class="cb" style="left:1685px;top:406px"><svg width="16" height="16" viewBox="0 0 16 16" style="position:absolute;left:-0.5px;top:-0.5px"><path d="M4.300 8.300l2.500 2.400 4.900-5" fill="none" stroke="#f2f2f2" stroke-width="2.100"/></svg></div>
<span class="t" style="left:1408px;top:442.0px;font-size:11px;color:#e0e0e0;font-style:italic;letter-spacing:-.12px">Velocidad del ventilador</span>
<span class="t" style="left:1657px;top:437px;font-size:17px;font-style:italic;font-weight:bold;font-family:'Liberation Serif',serif;color:#f0f0f0">f</span>
<svg class="ic" style="left:1664px;top:449px" width="7" height="7" viewBox="0 0 7 7"><path d="M1 1l5 5M6 1l-5 5" stroke="#f0f0f0" stroke-width="1.500"/></svg>
<div class="abs" style="left:1685px;top:434px;width:143px;height:26px;background:#39393a;border-bottom:1px solid #b4b4b4"></div>
<span class="t" style="left:1691px;top:441.9px;font-size:11.2px;color:#e8e8e8;letter-spacing:.2px">60.0</span>
<span class="t" style="left:1813px;top:442.2px;font-size:10.5px;color:#8a8a8a;">%</span>
<svg class="ic" style="left:1407px;top:471px" width="16" height="16" viewBox="0 0 16 16"><g fill="none" stroke="#f0f0f0" stroke-width="1.700" stroke-linejoin="round"><path d="M8 1l5.800 5.500L8 12 2.200 6.500z"/><path d="M1 9v6.500M4 11.500v4M6.700 13.200v2.300M9.300 13.200v2.300M12 11.500v4M15 9v6.500"/></g></svg>
<span class="t" style="left:1431px;top:472.8px;font-size:13.4px;color:#ededed;font-weight:bold;letter-spacing:.2px;word-spacing:-1.1px">Soporte</span>
<svg class="ic" style="left:1809.0px;top:474.0px" width="12" height="8" viewBox="0 0 12 8"><path d="M1.500 1.500l4.500 4.500 4.500-4.500" fill="none" stroke="#e6e6e6" stroke-width="1.4"/></svg>
<span class="t" style="left:1408px;top:506.0px;font-size:11px;color:#e0e0e0;font-style:italic;letter-spacing:-.12px">Generar soporte</span>
<svg class="ic" style="left:1656px;top:503px" width="16" height="16" viewBox="0 0 16 16" fill="none" stroke="#e8e8e8" stroke-width="1.7" stroke-linecap="round"><path d="M6.600 9.400a3.100 3.100 0 0 0 4.400 0l2.600-2.600a3.100 3.100 0 0 0-4.400-4.400l-1 1"/><path d="M9.400 6.600a3.100 3.100 0 0 0-4.400 0l-2.600 2.600a3.100 3.100 0 0 0 4.400 4.400l1-1"/></svg>
<div class="cb" style="left:1685px;top:502px"></div>
<svg class="ic" style="left:1407px;top:535px" width="16" height="16" viewBox="0 0 16 16"><g fill="none" stroke="#f0f0f0" stroke-width="1.800" stroke-linecap="round" stroke-linejoin="round"><path d="M8 1v7.500M4.800 5.500L8 8.800l3.200-3.300"/><path d="M1.500 7.500v4.300h13V7.500"/><path d="M1.500 15h13" stroke-dasharray="1.400 1.700" stroke-linecap="butt" stroke-width="1.600"/></g></svg>
<span class="t" style="left:1431px;top:536.8px;font-size:13.4px;color:#ededed;font-weight:bold;letter-spacing:.2px;word-spacing:-1.1px">Adherencia de la placa de impresión</span>
<svg class="ic" style="left:1809.0px;top:538.0px" width="12" height="8" viewBox="0 0 12 8"><path d="M1.500 1.500l4.500 4.500 4.500-4.500" fill="none" stroke="#e6e6e6" stroke-width="1.4"/></svg>
<span class="t" style="left:1408px;top:570.0px;font-size:11px;color:#e0e0e0;font-style:italic;letter-spacing:-.12px">Tipo adherencia de la placa de impresión</span>
<svg class="ic" style="left:1656px;top:567px" width="16" height="16" viewBox="0 0 16 16" fill="none" stroke="#e8e8e8" stroke-width="1.7" stroke-linecap="round"><path d="M6.600 9.400a3.100 3.100 0 0 0 4.400 0l2.600-2.600a3.100 3.100 0 0 0-4.400-4.400l-1 1"/><path d="M9.400 6.600a3.100 3.100 0 0 0-4.400 0l-2.600 2.600a3.100 3.100 0 0 0 4.400 4.400l1-1"/></svg>
<div class="abs" style="left:1685px;top:562px;width:143px;height:26px;background:#39393a;border-bottom:1px solid #b4b4b4"></div>
<span class="t" style="left:1691px;top:569.9px;font-size:11.2px;color:#e8e8e8;letter-spacing:.3px">Ninguno</span>
<svg class="ic" style="left:1802.0px;top:571.0px" width="12" height="8" viewBox="0 0 12 8"><path d="M1.500 1.500l4.500 4.500 4.500-4.500" fill="none" stroke="#e6e6e6" stroke-width="1.4"/></svg>
<svg class="ic" style="left:1407px;top:599px" width="16" height="16" viewBox="0 0 16 16"><g fill="none" stroke="#f0f0f0" stroke-width="1.700" stroke-linejoin="round"><path d="M8 1l2.100 4.700 5.100.5-3.800 3.400 1.100 5L8 12l-4.500 2.600 1.100-5L.8 6.200l5.100-.5z"/><path d="M8 5.200l.9 2 2.100.2-1.600 1.400.5 2.100L8 9.800l-1.900 1.100.5-2.100L5 7.400l2.100-.2z" fill="#f0f0f0" stroke="none"/></g></svg>
<span class="t" style="left:1431px;top:600.8px;font-size:13.4px;color:#ededed;font-weight:bold;letter-spacing:.2px;word-spacing:-1.1px">Modos especiales</span>
<svg class="ic" style="left:1809.0px;top:602.0px" width="12" height="8" viewBox="0 0 12 8"><path d="M1.500 1.500l4.500 4.500 4.500-4.500" fill="none" stroke="#e6e6e6" stroke-width="1.4"/></svg>
<span class="t" style="left:1408px;top:634.0px;font-size:11px;color:#e0e0e0;font-style:italic;letter-spacing:-.12px">Espiralizar el contorno exterior</span>
<svg class="ic" style="left:1626px;top:631px" width="16" height="16" viewBox="0 0 16 16" fill="none" stroke="#e8e8e8" stroke-width="1.7" stroke-linecap="round"><path d="M6.600 9.400a3.100 3.100 0 0 0 4.400 0l2.600-2.600a3.100 3.100 0 0 0-4.400-4.400l-1 1"/><path d="M9.400 6.600a3.100 3.100 0 0 0-4.400 0l-2.600 2.600a3.100 3.100 0 0 0 4.400 4.400l1-1"/></svg>
<svg class="ic" style="left:1656px;top:631px" width="16" height="16" viewBox="0 0 16 16" fill="none" stroke="#2a7bf4" stroke-width="1.700"><path d="M3.300 5.500A5.600 5.600 0 1 1 2.600 9.600" stroke-linecap="round"/><path d="M2.400 1.800v4.200h4.200" stroke-linecap="round" stroke-linejoin="round"/></svg>
<div class="cb" style="left:1685px;top:630px"><svg width="16" height="16" viewBox="0 0 16 16" style="position:absolute;left:-0.5px;top:-0.5px"><path d="M4.300 8.300l2.500 2.400 4.900-5" fill="none" stroke="#f2f2f2" stroke-width="2.100"/></svg></div>
<span class="t" style="left:1408px;top:665.9px;font-size:11.2px;color:#e0e0e0;letter-spacing:.27px">Contornos espiralizados suaves</span>
<svg class="ic" style="left:1656px;top:663px" width="16" height="16" viewBox="0 0 16 16" fill="none" stroke="#e8e8e8" stroke-width="1.7" stroke-linecap="round"><path d="M6.600 9.400a3.100 3.100 0 0 0 4.400 0l2.600-2.600a3.100 3.100 0 0 0-4.400-4.400l-1 1"/><path d="M9.400 6.600a3.100 3.100 0 0 0-4.400 0l-2.600 2.600a3.100 3.100 0 0 0 4.400 4.400l1-1"/></svg>
<div class="cb" style="left:1685px;top:662px"><svg width="16" height="16" viewBox="0 0 16 16" style="position:absolute;left:-0.5px;top:-0.5px"><path d="M4.300 8.300l2.500 2.400 4.900-5" fill="none" stroke="#f2f2f2" stroke-width="2.100"/></svg></div>
<svg class="ic" style="left:1407px;top:695px" width="16" height="16" viewBox="0 0 16 16"><g fill="none" stroke="#f0f0f0" stroke-width="1.800" stroke-linejoin="round" stroke-linecap="round"><path d="M5 1h6M6.200 1v5.500L2.800 13.800a.9.900 0 0 0 .8 1.200h8.800a.9.900 0 0 0 .8-1.200L9.800 6.500V1"/></g></svg>
<span class="t" style="left:1431px;top:696.8px;font-size:13.4px;color:#ededed;font-weight:bold;letter-spacing:.2px;word-spacing:-1.1px">Experimental</span>
<svg class="ic" style="left:1809.0px;top:698.0px" width="12" height="8" viewBox="0 0 12 8"><path d="M1.500 1.500l4.500 4.500 4.500-4.500" fill="none" stroke="#e6e6e6" stroke-width="1.4"/></svg>
<span class="t" style="left:1408px;top:729.9px;font-size:11.2px;color:#e0e0e0;letter-spacing:.27px">Habilitar parabrisas</span>
<svg class="ic" style="left:1656px;top:727px" width="16" height="16" viewBox="0 0 16 16" fill="none" stroke="#e8e8e8" stroke-width="1.7" stroke-linecap="round"><path d="M6.600 9.400a3.100 3.100 0 0 0 4.400 0l2.600-2.600a3.100 3.100 0 0 0-4.400-4.400l-1 1"/><path d="M9.400 6.600a3.100 3.100 0 0 0-4.400 0l-2.600 2.600a3.100 3.100 0 0 0 4.400 4.400l1-1"/></svg>
<div class="cb" style="left:1685px;top:726px"></div>
<div class="sep" style="left:1399px;top:367px;width:429px"></div>
<div class="sep" style="left:1399px;top:463px;width:429px"></div>
<div class="sep" style="left:1399px;top:527px;width:429px"></div>
<div class="sep" style="left:1399px;top:591px;width:429px"></div>
<div class="sep" style="left:1399px;top:687px;width:429px"></div>
<div class="sep" style="left:1373px;top:751px;width:494px"></div>
<div class="abs" style="left:1836px;top:637px;width:9px;height:106px;background:#7e7e7e;border-radius:4.500px"></div>
<div class="abs" style="left:1386px;top:765px;width:139px;height:33px;border:1px solid #e8e8e8"></div>
<svg class="ic" style="left:1403px;top:774px" width="9" height="14" viewBox="0 0 9 14"><path d="M7.500 1l-6 6 6 6" fill="none" stroke="#ececec" stroke-width="1.500"/></svg>
<span class="t" style="left:1425px;top:774.9px;font-size:13.2px;color:#ececec;letter-spacing:.1px">Recomendado</span>
<!--/PANEL-->

<!--LAYERSLIDER-->
<div class="abs" style="left:1894px;top:309px;width:6px;height:421px;background:#f4f4f4"></div>
<div class="abs" style="left:1887px;top:298px;width:20px;height:20px;border-radius:50%;background:#fff"></div>
<div class="abs" style="left:1887px;top:720px;width:20px;height:20px;border-radius:50%;background:#fff"></div>
<div class="abs" style="left:1881px;top:272px;width:32px;height:22px;background:#1f1f20;border:1px solid #8c8c8c"></div>
<svg class="ic" style="left:1892px;top:292px" width="10" height="6" viewBox="0 0 10 6"><path d="M0 0.500L5 5 10 0.500" fill="#1f1f20" stroke="#8c8c8c"/><path d="M1 0h8" stroke="#1f1f20" stroke-width="1.600"/></svg>
<span class="t" style="left:1888px;top:277.4px;font-size:11.2px;color:#e8e8e8;letter-spacing:.1px">253</span>
<svg class="ic" style="left:661px;top:1001px" width="14" height="16" viewBox="0 0 14 16"><path d="M2 2l10.500 6L2 14z" fill="none" stroke="#f4f4f4" stroke-width="1.600" stroke-linejoin="round"/></svg>
<div class="abs" style="left:691px;top:1006.500px;width:422px;height:5px;background:#f6f6f6;border-radius:2.500px"></div>
<div class="abs" style="left:1103px;top:999px;width:20px;height:20px;border-radius:50%;background:#fff"></div>
<div id="lefttools" class="abs"></div>
<svg class="ic" style="left:15px;top:393px" width="22" height="22" viewBox="0 0 22 22" fill="none" stroke="#5c5c5c" stroke-width="1.800" stroke-linecap="round" stroke-linejoin="round"><path d="M11 1.500v19M1.500 11h19M8 4.500l3-3 3 3M8 17.500l3 3 3-3M4.500 8l-3 3 3 3M17.500 8l3 3-3 3"/></svg>
<svg class="ic" style="left:15px;top:445px" width="22" height="22" viewBox="0 0 22 22" fill="none" stroke="#5c5c5c" stroke-width="1.800" stroke-linecap="round" stroke-linejoin="round"><path d="M8.500 2H17a3 3 0 0 1 3 3v12a3 3 0 0 1-3 3h-3M2 8.500V5a3 3 0 0 1 3-3h0"/><rect x="2" y="12" width="8" height="8" rx="1"/><path d="M10.500 11.500l6-6M12 5.500h4.500V10"/></svg>
<svg class="ic" style="left:15px;top:497px" width="22" height="22" viewBox="0 0 22 22" fill="none" stroke="#5c5c5c" stroke-width="1.800" stroke-linecap="round" stroke-linejoin="round"><path d="M4 7.500A8.500 8.500 0 0 1 19.500 11"/><path d="M3.500 2.500v5.500H9"/><path d="M19.500 11a8.500 8.500 0 0 1-17 1" stroke-dasharray="0.100 3.600"/></svg>
<svg class="ic" style="left:15px;top:549px" width="22" height="22" viewBox="0 0 22 22" fill="none" stroke="#5c5c5c" stroke-width="1.800" stroke-linecap="round" stroke-linejoin="round"><path d="M11 1v20" stroke-dasharray="0.100 3.800"/><path d="M2 5.500l6 5.500-6 5.500z"/><path d="M20 5.500l-6 5.500 6 5.500z" fill="#5c5c5c"/></svg>
<svg class="ic" style="left:15px;top:601px" width="22" height="22" viewBox="0 0 22 22" fill="none" stroke="#5c5c5c" stroke-width="1.800" stroke-linecap="round" stroke-linejoin="round"><rect x="2.500" y="2.500" width="6.500" height="6.500"/><rect x="2" y="12" width="8" height="8" fill="#5c5c5c"/><rect x="13" y="13" width="6.500" height="6.500"/><path d="M13 8.500l6.500-6.500M13 4.500l2.500-2.500M16.500 9l3.500-3.500" stroke-width="2.200"/></svg>
<svg class="ic" style="left:15px;top:653px" width="22" height="22" viewBox="0 0 22 22" fill="none" stroke="#5c5c5c" stroke-width="1.800" stroke-linecap="round" stroke-linejoin="round"><path d="M10 1.500l7 6.500-7 6.500-7-6.500z"/><path d="M2 11v9.500M5.500 14.500v6M9 17.500v3" stroke-width="1.600"/><path d="M15 16l5 5M20 16l-5 5" stroke-width="2"/></svg>
<svg class="ic" style="left:18px;top:703px" width="17" height="26" viewBox="0 0 17 26"><path d="M0 3.500C0 0 17 0 17 3.500V22.500C17 26 0 26 0 22.500z" fill="#5c5c5c"/></svg>
<svg class="ic" style="left:66px;top:844px" width="11" height="8" viewBox="0 0 11 8"><path d="M1 1.500l4.500 4.500 4.500-4.500" fill="none" stroke="#e6e6e6" stroke-width="1.300"/></svg>
<span class="t" style="left:91px;top:844.4px;font-size:11.2px;color:#d6d6d6;letter-spacing:.15px">Lista de objetos</span>
<div id="objlist" class="abs"></div>
<span class="t" style="left:70px;top:871.9px;font-size:11.2px;color:#ececec;letter-spacing:.1px">christmas_star.stl</span>
<span class="t" style="left:70px;top:903.9px;font-size:11.2px;color:#ececec;letter-spacing:.07px">christmas_star.stl(1)</span>
<svg class="ic" style="left:66px;top:937px" width="16" height="16" viewBox="0 0 16 16"><path d="M3.500 10.500l7-7.500 2.300 2.300-7.300 7.200H3.500z" fill="#f0f0f0"/><path d="M1 14.500h14" stroke="#f0f0f0" stroke-width="1.400"/></svg>
<span class="t" style="left:98px;top:939.9px;font-size:11.2px;color:#ececec;letter-spacing:.2px">christmas_star</span>
<span class="t" style="left:65px;top:965.9px;font-size:11.2px;color:#ececec;">71.2 x 109.1 x 50.6 mm</span>
<svg class="ic" style="left:67px;top:995px" width="22" height="22" viewBox="0 0 22 22"><path d="M11 2l8.500 4.700v9.600L11 21l-8.500-4.700V6.700z M11 11.500V21M11 11.500L2.500 6.700M11 11.500l8.500-4.800" fill="none" stroke="#fff" stroke-width="1.800" stroke-linejoin="round"/></svg>
<svg class="ic" style="left:99px;top:995px" width="22" height="22" viewBox="0 0 22 22"><path d="M2.500 7.500v11a1 1 0 0 0 1 1h11a1 1 0 0 0 1-1v-11zM2.500 7.500l4-4.500h12l-3 4.500M18.500 3v11l-3 4.500" fill="none" stroke="#fff" stroke-width="1.800" stroke-linejoin="round"/><rect x="2.500" y="7.500" width="13" height="12" fill="#fff"/></svg>
<svg class="ic" style="left:131px;top:995px" width="22" height="22" viewBox="0 0 22 22"><path d="M2.500 7.500v11a1 1 0 0 0 1 1h11a1 1 0 0 0 1-1v-11zM2.500 7.500l4-4.500h12l-3 4.500M18.500 3v11l-3 4.500" fill="none" stroke="#fff" stroke-width="1.800" stroke-linejoin="round"/><path d="M2.500 7.500l4-4.500h12l-3 4.500z" fill="#fff"/></svg>
<svg class="ic" style="left:163px;top:995px" width="22" height="22" viewBox="0 0 22 22"><path d="M19.500 7.500v11a1 1 0 0 1-1 1h-11a1 1 0 0 1-1-1v-11zM19.500 7.500l-4-4.500h-12l3 4.500M3.500 3v11l3 4.500" fill="none" stroke="#fff" stroke-width="1.800" stroke-linejoin="round"/><path d="M3.500 3v11l3 4.500v-11z" fill="#fff"/></svg>
<svg class="ic" style="left:195px;top:995px" width="22" height="22" viewBox="0 0 22 22"><path d="M2.500 7.500v11a1 1 0 0 0 1 1h11a1 1 0 0 0 1-1v-11zM2.500 7.500l4-4.500h12l-3 4.500M18.500 3v11l-3 4.500" fill="none" stroke="#fff" stroke-width="1.800" stroke-linejoin="round"/><path d="M18.500 3v11l-3 4.500v-11z" fill="#fff"/></svg>
<div id="action" class="abs"></div>
<svg class="ic" style="left:1583px;top:906px" width="17" height="17" viewBox="0 0 17 17" fill="none" stroke="#f0f0f0" stroke-width="1.600" stroke-linecap="round"><circle cx="8.500" cy="8.500" r="7.200"/><path d="M8.500 4.300v4.500h3.600"/></svg>
<span class="t" style="left:1608px;top:907.9px;font-size:13.3px;color:#f0f0f0;font-weight:bold;letter-spacing:.1px;word-spacing:-.8px">1 hora 23 minutos</span>
<svg class="ic" style="left:1857px;top:905px" width="18" height="18" viewBox="0 0 18 18" fill="none" stroke="#f0f0f0" stroke-width="1.500"><circle cx="9" cy="9" r="7.600"/><path d="M9 8v5.300" stroke-width="1.900"/><circle cx="9" cy="5.300" r="1.100" fill="#f0f0f0" stroke="none"/></svg>
<svg class="ic" style="left:1583px;top:934px" width="18" height="18" viewBox="0 0 18 18" fill="none" stroke="#f0f0f0" stroke-width="1.600" stroke-linecap="round"><path d="M3 13.800A7.200 7.200 0 1 1 9 16.200"/><path d="M1 17c.3-1.500 1-2.500 2-3.200"/><circle cx="9" cy="9" r="2.400"/><path d="M10.500 7.200l1.200-1.600"/></svg>
<span class="t" style="left:1608px;top:937.9px;font-size:11.2px;color:#e8e8e8;letter-spacing:.2px">12g · 3.89m</span>
<div id="savebtn" class="abs">Guardar en disco</div>
<!--/LAYERSLIDER-->

<!--LEFT-->
<!--/LEFT-->

<!--OBJ-->
<!--/OBJ-->

<!--ACTION-->
<!--/ACTION-->

<!--TASKBAR-->
<div id="taskbar" class="abs"></div>
<div class="abs" style="left:0;top:1031px;width:1920px;height:1px;background:#bcbcbc"></div>
<div class="abs" style="left:22px;top:1046px;width:20px;height:20px;border-radius:50%;background:linear-gradient(160deg,#fbb52a,#f26a12)"></div>
<span class="t" style="left:52px;top:1043.2px;font-size:11.5px;color:#1a1a1a;">22°C</span>
<span class="t" style="left:52px;top:1059.5px;font-size:12px;color:#5c5c5c;">Soleado</span>
<svg class="ic" style="left:733px;top:1045px" width="24" height="23" viewBox="0 0 24 23"><defs><linearGradient id="wg" x1="0" y1="0" x2="1" y2="1"><stop offset="0" stop-color="#35b3f2"/><stop offset="1" stop-color="#0a63c9"/></linearGradient></defs><g fill="url(#wg)"><rect x="0" y="0" width="11.300" height="10.800" rx="1"/><rect x="12.500" y="0" width="11.300" height="10.800" rx="1"/><rect x="0" y="12" width="11.300" height="10.800" rx="1"/><rect x="12.500" y="12" width="11.300" height="10.800" rx="1"/></g></svg>
<div class="abs" style="left:772px;top:1041px;width:114px;height:30px;border-radius:15px;background:#f7f7f7;border:1px solid #e9e9e9"></div>
<svg class="ic" style="left:793px;top:1048px" width="15" height="15" viewBox="0 0 15 15" fill="none" stroke="#222" stroke-width="1.400" stroke-linecap="round"><circle cx="8.800" cy="6" r="4.600"/><path d="M5.500 9.300L1.200 13.600"/></svg>
<span class="t" style="left:812px;top:1051.6px;font-size:11.8px;color:#1a1a1a;">Búsqueda</span>
<svg class="ic" style="left:899px;top:1045px" width="25" height="23" viewBox="0 0 25 23"><defs><linearGradient id="tv" x1="0" y1="1" x2="1" y2="0"><stop offset="0" stop-color="#b9b9b9"/><stop offset="1" stop-color="#fdfdfd"/></linearGradient></defs><rect x="1" y="6" width="17" height="16" rx="1.500" fill="#2b2b2b"/><rect x="7" y="0.500" width="17" height="16" rx="1.500" fill="url(#tv)"/></svg>
<svg class="ic" style="left:944px;top:1046px" width="23" height="21" viewBox="0 0 23 21"><rect x="0.500" y="0.500" width="22" height="15" rx="1" fill="#27b3dc" stroke="#4b6c78"/><rect x="2" y="2" width="19" height="12" fill="#3cc6ea"/><rect x="9" y="16" width="5" height="2.500" fill="#8a8a8a"/><rect x="5.500" y="18.500" width="12" height="1.800" rx=".8" fill="#6a6a6a"/></svg>
<svg class="ic" style="left:987px;top:1044px" width="26" height="23" viewBox="0 0 26 23"><path d="M1 3.500a1.500 1.500 0 0 1 1.500-1.500h7l2.500 2.500h11.500A1.500 1.500 0 0 1 25 6v4H1z" fill="#e9a520"/><rect x="1" y="6" width="24" height="16" rx="1.500" fill="#fbcb3c"/><rect x="6" y="15" width="14" height="7" rx="2.500" fill="#1a7fd8"/><rect x="9" y="17.500" width="8" height="2" rx="1" fill="#0b5fb0"/></svg>
<div class="abs" style="left:997px;top:1072px;width:6px;height:3px;border-radius:1.500px;background:#7a7a7a"></div>
<svg class="ic" style="left:1031px;top:1044px" width="25" height="25" viewBox="-12.500 -12.500 25 25"><circle r="12" fill="#e74335"/><path d="M0 0L-10.400 -6A12 12 0 0 0 -1.500 11.900L4.500 1z" fill="#2fa650"/><path d="M0 0L-1.500 11.900A12 12 0 0 0 10.400 -6H0z" fill="#fcc31e" transform="rotate(0)"/><path d="M-10.400 -6A12 12 0 0 1 10.400 -6H0z" fill="#e74335"/><circle r="5.600" fill="#fff"/><circle r="4.400" fill="#3f7fe8"/></svg>
<svg class="ic" style="left:1077px;top:1044px" width="23" height="24" viewBox="0 0 23 24"><rect x="0.500" y="2.500" width="22" height="21" rx="2.500" fill="#1785dd"/><rect x="0.500" y="2.500" width="22" height="6" rx="2.500" fill="#0f5fb4"/><rect x="5" y="0.500" width="2" height="5" rx="1" fill="#3aa0ee"/><rect x="16" y="0.500" width="2" height="5" rx="1" fill="#3aa0ee"/><g fill="#fff"><rect x="7.500" y="11" width="2.300" height="2.300"/><rect x="11" y="11" width="2.300" height="2.300"/><rect x="14.500" y="11" width="2.300" height="2.300"/><rect x="4" y="14.500" width="2.300" height="2.300"/><rect x="7.500" y="14.500" width="2.300" height="2.300"/><rect x="11" y="14.500" width="2.300" height="2.300"/><rect x="14.500" y="14.500" width="2.300" height="2.300"/><rect x="4" y="18" width="2.300" height="2.300"/><rect x="7.500" y="18" width="2.300" height="2.300"/><rect x="11" y="18" width="2.300" height="2.300"/></g></svg>
<svg class="ic" style="left:1119px;top:1044px" width="26" height="23" viewBox="0 0 26 23"><path d="M13 0.500L25 9v13H1V9z" fill="#0f5fb4"/><rect x="3.500" y="6" width="19" height="12" fill="#fff"/><path d="M1 9.500l12 8 12-8V22H1z" fill="#2c97e8"/><path d="M1 22l12-8.500L25 22z" fill="#1a7fd8"/></svg>
<div class="abs" style="left:1157px;top:1037px;width:38px;height:38px;border-radius:4px;background:#f4f4f4;border:1px solid #ececec"></div>
<svg class="ic" style="left:1166px;top:1046px" width="20" height="20" viewBox="0 0 20 20"><path d="M3 0h14a3 3 0 0 1 3 3v11l-6 6H3a3 3 0 0 1-3-3V3a3 3 0 0 1 3-3z" fill="#1a63e0"/><path d="M14 6.500A4.600 4.600 0 1 0 14 13.500" fill="none" stroke="#fff" stroke-width="2.200"/></svg>
<div class="abs" style="left:1168px;top:1072px;width:16px;height:3px;border-radius:1.500px;background:#1ec86e"></div>
<svg class="ic" style="left:1684px;top:1051px" width="14" height="9" viewBox="0 0 14 9"><path d="M1.500 7.500l5.500-5.500 5.500 5.500" fill="none" stroke="#1a1a1a" stroke-width="1.300"/></svg>
<svg class="ic" style="left:1707px;top:1050px" width="17" height="12" viewBox="0 0 17 12" fill="none" stroke="#76dc3c" stroke-width="1.800"><path d="M1 11V8.500a7.500 7.500 0 0 1 15 0V11"/><path d="M4.500 11V7.500M8.500 11V6.500M12.500 11V7.500" stroke-width="2"/></svg>
<svg class="ic" style="left:1731px;top:1049px" width="17" height="15" viewBox="0 0 17 15" fill="#1a1a1a"><path d="M4.300 0L0 2.800l4.300 2.700 4.200-2.700zM12.700 0L8.500 2.800l4.200 2.700L17 2.800zM0 8.300l4.300 2.700 4.200-2.700-4.200-2.800zM12.700 5.500L8.500 8.300l4.200 2.700L17 8.300zM4.300 12l4.200 2.700 4.200-2.700-4.200-2.700z"/></svg>
<svg class="ic" style="left:1758px;top:1048px" width="18" height="17" viewBox="0 0 18 17" fill="none" stroke="#1a1a1a" stroke-width="1.200"><rect x="0.600" y="2.600" width="12" height="9.500"/><path d="M6.500 12.500v3M3 15.800h7.500"/><rect x="13.500" y="0.600" width="3.500" height="5" rx="1" fill="#e4e4e4"/><path d="M15.200 5.600V12H12.600"/></svg>
<svg class="ic" style="left:1782px;top:1049px" width="18" height="14" viewBox="0 0 18 14" fill="none" stroke="#1a1a1a" stroke-width="1.200" stroke-linejoin="round"><path d="M1 4.800h2.800L8 1.200v11.600L3.800 9.200H1z"/><path d="M10.500 4.500a3.500 3.500 0 0 1 0 5"/><path d="M12.800 2.500a6.500 6.500 0 0 1 0 9" stroke="#9a9a9a"/><path d="M15 .8a9 9 0 0 1 0 12.400" stroke="#c4c4c4"/></svg>
<span class="t" style="right:44px;top:1042px;font-size:12px;color:#1a1a1a">12:57</span>
<span class="t" style="right:44px;top:1058px;font-size:12px;color:#1a1a1a">25/07/2023</span>
<div class="abs" style="left:1884px;top:1048px;width:16px;height:16px;border-radius:50%;background:#12c46a"></div>
<span class="t" style="left:1889px;top:1051.0px;font-size:11px;color:#fff;">1</span>
<!--/TASKBAR-->
</body>
</html>
